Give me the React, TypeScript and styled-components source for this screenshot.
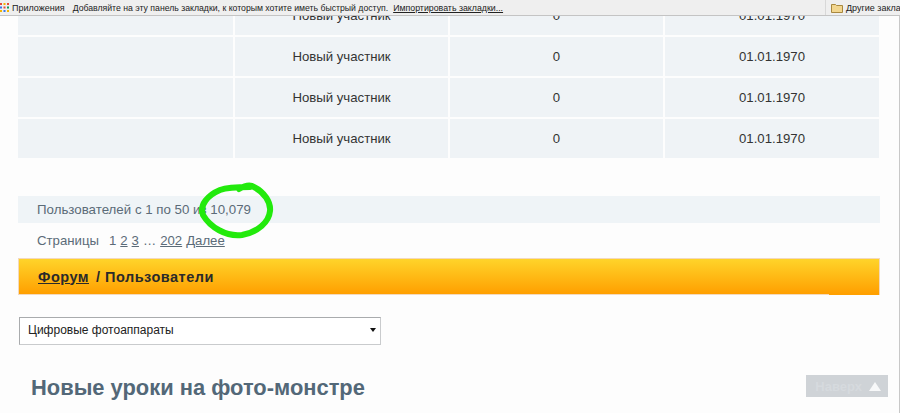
import React from 'react';
import styled, { createGlobalStyle } from 'styled-components';

const GlobalStyle = createGlobalStyle`
    html, body {
        margin: 0;
        padding: 0;
        background: #fdfdfd;
        font-family: 'Liberation Sans', Arial, sans-serif;
    }
`;

const Screen = styled.div`
    position: relative;
    width: 900px;
    height: 413px;
    overflow: hidden;
    background: #fdfdfd;
`;

// закладки браузера поверх страницы
const BookmarksBar = styled.div`
    position: absolute;
    top: 0;
    left: 0;
    right: 0;
    height: 15px;
    display: flex;
    align-items: center;
    background: #efefef;
    border-bottom: 1px solid #c4c4c4;
    font-size: 9px;
    color: #222;
    white-space: nowrap;
    z-index: 2;
`;

const AppsLabel = styled.span`
    margin-left: 3px;
    margin-right: 8px;
`;

const BarHint = styled.span`
    font-size: 8.7px;
`;

const ImportLink = styled.span`
    margin-left: 5px;
    font-size: 8.8px;
    text-decoration: underline;
`;

const OtherBookmarks = styled.div`
    margin-left: auto;
    display: flex;
    align-items: center;
    gap: 3px;
    width: 69px;
    height: 15px;
    overflow: hidden;
    border-left: 1px solid #d8d8d8;
    padding-left: 5px;
`;

const Page = styled.div`
    display: flex;
    flex-direction: column;
    width: 862px;
    margin: -4px 0 0 18px;
`;

const Table = styled.div`
    display: grid;
    grid-template-columns: 215px 213px 213px 214px;
    column-gap: 2px;
    row-gap: 2px;
`;

const Cell = styled.div`
    height: 39px;
    display: flex;
    align-items: center;
    justify-content: center;
    background: #eff3f6;
    font-size: 13.2px;
    color: #333;
`;

const CountBar = styled.div`
    margin-top: 38px;
    height: 27px;
    display: flex;
    align-items: center;
    padding-left: 19px;
    background: #eff4f7;
    font-size: 13.3px;
    color: #5b6b78;
`;

const Pager = styled.div`
    height: 35px;
    display: flex;
    align-items: center;
    padding-left: 19px;
    font-size: 13.2px;
    color: #5b6b78;
`;

const PagerLabel = styled.span`
    margin-right: 10px;
`;

const PageLink = styled.span<{ $plain?: boolean }>`
    margin-right: 4px;
    text-decoration: ${(p) => (p.$plain ? 'none' : 'underline')};
`;

const Breadcrumbs = styled.div`
    position: relative;
    height: 37px;
    display: flex;
    align-items: center;
    padding-left: 19px;
    background: linear-gradient(#ffd42a, #ff9f00);
    border: 1px solid #f3d9bd;
    box-sizing: border-box;
    font-size: 14.5px;
    font-weight: bold;
    letter-spacing: 0.5px;
    color: #2a2a2a;

    /* светлая линия снизу заканчивается раньше края */
    &::after {
        content: '';
        position: absolute;
        right: 0;
        bottom: -1px;
        width: 50px;
        height: 1px;
        background: #ffa000;
    }
`;

const ForumLink = styled.span`
    margin-right: 7px;
    text-decoration: underline;
`;

const Select = styled.div`
    margin-top: 22px;
    margin-left: 1px;
    width: 362px;
    height: 28px;
    box-sizing: border-box;
    display: flex;
    align-items: center;
    justify-content: space-between;
    padding: 0 4px 2px 8px;
    background: #fff;
    border: 1px solid #a9abad;
    border-bottom-color: #c9cbcd;
    border-right-color: #c9cbcd;
    font-size: 12px;
    color: #222;
`;

const Arrow = styled.span`
    width: 0;
    height: 0;
    border-left: 3px solid transparent;
    border-right: 3px solid transparent;
    border-top: 4px solid #111;
`;

const Heading = styled.h2`
    margin: 30px 0 0 13px;
    font-size: 21.9px;
    line-height: 26px;
    font-weight: bold;
    color: #536878;
`;

const ToTop = styled.div`
    position: absolute;
    left: 806px;
    top: 375px;
    width: 82px;
    height: 22px;
    display: flex;
    align-items: center;
    justify-content: flex-end;
    gap: 7px;
    padding-right: 7px;
    box-sizing: border-box;
    background: #cfd3d7;
    color: #d6dade;
    font-size: 13px;
    font-weight: bold;
`;

const Scribble = styled.svg`
    position: absolute;
    left: 190px;
    top: 175px;
    pointer-events: none;
`;

const WindowEdge = styled.div`
    position: absolute;
    top: 16px;
    right: 0;
    width: 1px;
    bottom: 0;
    background: #c8c8c8;
`;

const rowLabels = ['0', '1', '2', '3'];

const App: React.FC = () => {
    return (
        <Screen>
            <GlobalStyle />
            <BookmarksBar>
                <svg width="9" height="9" viewBox="0 0 9 9">
                    <rect x="0" y="0" width="2" height="2" fill="#e5493a" />
                    <rect x="3.5" y="0" width="2" height="2" fill="#f4b400" />
                    <rect x="7" y="0" width="2" height="2" fill="#e5493a" />
                    <rect x="0" y="3.5" width="2" height="2" fill="#3b78e7" />
                    <rect x="3.5" y="3.5" width="2" height="2" fill="#e5493a" />
                    <rect x="7" y="3.5" width="2" height="2" fill="#0f9d58" />
                    <rect x="0" y="7" width="2" height="2" fill="#f4b400" />
                    <rect x="3.5" y="7" width="2" height="2" fill="#3b78e7" />
                    <rect x="7" y="7" width="2" height="2" fill="#f4b400" />
                </svg>
                <AppsLabel>Приложения</AppsLabel>
                <BarHint>Добавляйте на эту панель закладки, к которым хотите иметь быстрый доступ.</BarHint>
                <ImportLink>Импортировать закладки...</ImportLink>
                <OtherBookmarks>
                    <svg width="12" height="10" viewBox="0 0 12 10" style={{ flexShrink: 0 }}>
                        <path d="M0.5 1.5 H4.5 L5.5 2.5 H11.5 V9.5 H0.5 Z" fill="#f2d68f" stroke="#a8883f" />
                    </svg>
                    <span>Другие заклад</span>
                </OtherBookmarks>
            </BookmarksBar>

            <Page>
                <Table>
                    {rowLabels.map((row) => (
                        <React.Fragment key={row}>
                            <Cell />
                            <Cell>Новый участник</Cell>
                            <Cell>0</Cell>
                            <Cell>01.01.1970</Cell>
                        </React.Fragment>
                    ))}
                </Table>

                <CountBar>Пользователей с 1 по 50 из 10,079</CountBar>
                <Pager>
                    <PagerLabel>Страницы</PagerLabel>
                    <PageLink $plain>1</PageLink>
                    <PageLink>2</PageLink>
                    <PageLink>3</PageLink>
                    <PageLink $plain>…</PageLink>
                    <PageLink>202</PageLink>
                    <PageLink>Далее</PageLink>
                </Pager>
                <Breadcrumbs>
                    <ForumLink>Форум</ForumLink>/ Пользователи
                </Breadcrumbs>

                <Select>
                    Цифровые фотоаппараты
                    <Arrow />
                </Select>
                <Heading>Новые уроки на фото-монстре</Heading>
            </Page>

            <WindowEdge />
            <ToTop>
                Наверх
                <svg width="12" height="9" viewBox="0 0 12 9">
                    <path d="M6 0 L12 9 H0 Z" fill="#f7f8f9" />
                </svg>
            </ToTop>
            <Scribble width="100" height="70" viewBox="0 0 100 70">
                <path
                    d="M49 14 C54 11 60 9 64 12 C74 17 81 27 80 36 C79 47 68 57 52 60 C36 62 20 52 13 40 C9 30 18 20 30 15 C38 12 48 12 60 12"
                    fill="none"
                    stroke="#22ea0c"
                    strokeWidth="6"
                    strokeLinecap="round"
                    strokeLinejoin="round"
                />
            </Scribble>
        </Screen>
    );
};

export default App;
